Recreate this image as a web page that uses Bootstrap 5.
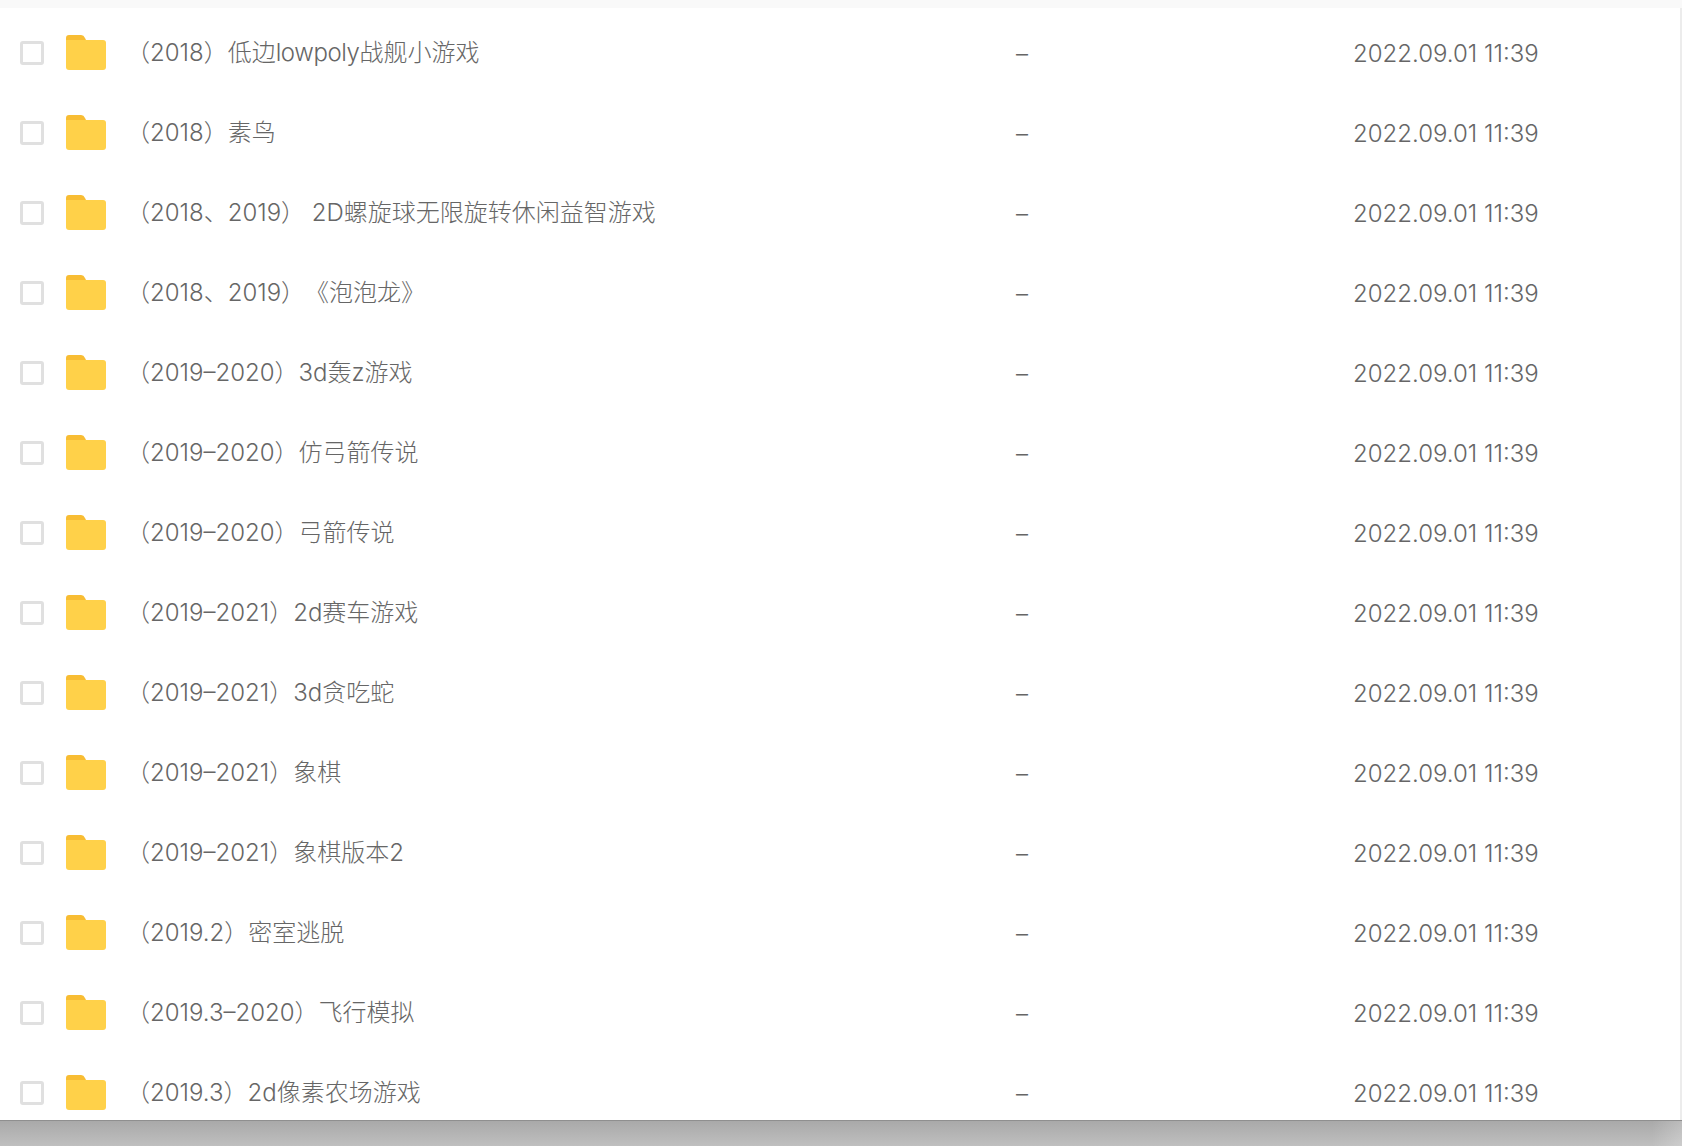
<!DOCTYPE html>
<html lang="en">

<head>
    <meta charset="UTF-8">
    <meta name="viewport" content="width=device-width, initial-scale=1">
    <title>File list</title>
    <link href="https://cdn.jsdelivr.net/npm/bootstrap@5.3.3/dist/css/bootstrap.min.css" rel="stylesheet">
    <style>
        html, body { height: 100%; overflow: hidden; }
        body { font-family: "Inter", "Noto Sans CJK SC", sans-serif; background: #fff; color: #666; }
        .page-wrap { height: 1146px; }
        .top-strip { height: 8px; background: #f9f9f9; }
        .list-area { height: 1112px; }
        .file-list { padding-top: 5px; }
        .right-strip { width: 2px; background: #ececec; }
        .bottom-shade { height: 26px; border-top: 1px solid #8f8f8f; background: linear-gradient(to right, transparent calc(100% - 30px), rgba(255, 255, 255, .22)), linear-gradient(to bottom, #a9a9a9, #bfbfbf); }
        .file-row { height: 80px; flex-shrink: 0; font-size: 24px; font-weight: 300; color: #666; text-spacing-trim: space-all; }
        .tick-box { width: 24px; height: 24px; margin-left: 20px; border: 3px solid #e0e0e0; border-radius: 3px; background: #fff; flex-shrink: 0; }
        .folder-icon { width: 40px; height: 35px; margin-left: 22px; margin-bottom: 1px; flex-shrink: 0; }
        .file-name { width: 890px; margin-left: 20px; white-space: nowrap; }
        .file-size { width: 337px; margin-top: 2px; }
        .file-date { white-space: nowrap; margin-top: 2px; }
        .tight-latin { letter-spacing: -0.4px; }
    </style>
</head>

<body>

    <div class="page-wrap d-flex flex-column">
        <div class="top-strip"></div>

        <div class="list-area d-flex overflow-hidden">
            <div id="fileList" class="file-list flex-grow-1 d-flex flex-column"></div>
            <div class="right-strip"></div>
        </div>

        <div class="bottom-shade"></div>
    </div>

    <script>
        const names = [
            '（2018）低边<span class="tight-latin">lowpoly</span>战舰小游戏',
            "（2018）素鸟",
            "（2018、2019） 2D螺旋球无限旋转休闲益智游戏",
            "（2018、2019）《泡泡龙》",
            "（2019–2020）3d轰z游戏",
            "（2019–2020）仿弓箭传说",
            "（2019–2020）弓箭传说",
            "（2019–2021）2d赛车游戏",
            "（2019–2021）3d贪吃蛇",
            "（2019–2021）象棋",
            "（2019–2021）象棋版本2",
            "（2019.2）密室逃脱",
            "（2019.3–2020）飞行模拟",
            "（2019.3）2d像素农场游戏"
        ];

        const folderSvg = `<svg class="folder-icon" viewBox="0 0 40 35">
            <path d="M0 3a3 3 0 0 1 3-3h11a5 5 0 0 1 5 3l1 2H0z" fill="#f8bd33"/>
            <path d="M0 5h37a3 3 0 0 1 3 3v24a3 3 0 0 1-3 3H3a3 3 0 0 1-3-3z" fill="#ffd149"/>
        </svg>`;

        const list = document.getElementById("fileList");
        for (let index = 0; index < names.length; index++) {
            const row = `
            <div class="file-row d-flex align-items-center">
                <div class="tick-box"></div>
                ${folderSvg}
                <div class="file-name">${names[index]}</div>
                <div class="file-size">–</div>
                <div class="file-date">2022.09.01 11:39</div>
            </div>
            `
            list.insertAdjacentHTML("beforeend", row)
        }
    </script>

    <script src="https://cdn.jsdelivr.net/npm/bootstrap@5.3.3/dist/js/bootstrap.bundle.min.js"></script>
</body>

</html>
